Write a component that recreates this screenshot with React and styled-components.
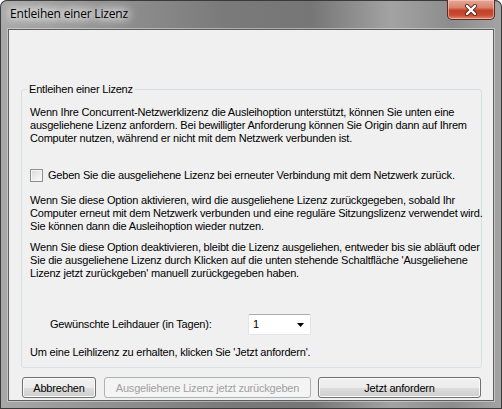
import React from 'react'
import styled, { createGlobalStyle } from 'styled-components'

const GlobalStyle = createGlobalStyle`
    html, body {
        margin: 0;
        padding: 0;
        background: #ffffff;
    }
    body {
        font-family: "Liberation Sans", Arial, sans-serif;
    }
`

const intro = [
    'Wenn Ihre Concurrent-Netzwerklizenz die Ausleihoption unterstützt, können Sie unten eine',
    'ausgeliehene Lizenz anfordern. Bei bewilligter Anforderung können Sie Origin dann auf Ihrem',
    'Computer nutzen, während er nicht mit dem Netzwerk verbunden ist.',
]

const whenOn = [
    'Wenn Sie diese Option aktivieren, wird die ausgeliehene Lizenz zurückgegeben, sobald Ihr',
    'Computer erneut mit dem Netzwerk verbunden und eine reguläre Sitzungslizenz verwendet wird.',
    'Sie können dann die Ausleihoption wieder nutzen.',
]

const whenOff = [
    'Wenn Sie diese Option deaktivieren, bleibt die Lizenz ausgeliehen, entweder bis sie abläuft oder',
    "Sie die ausgeliehene Lizenz durch Klicken auf die unten stehende Schaltfläche 'Ausgeliehene",
    "Lizenz jetzt zurückgeben' manuell zurückgegeben haben.",
]

const CloseIcon = () => (
    <svg width="14" height="12" viewBox="0 0 14 12">
        <path d="M3 2 L11 10 M11 2 L3 10" stroke="#4a1a10" strokeWidth="4.2" strokeLinecap="round" opacity="0.8" />
        <path d="M3 2 L11 10 M11 2 L3 10" stroke="#ffffff" strokeWidth="2.4" strokeLinecap="round" />
    </svg>
)

const ArrowIcon = () => (
    <svg width="7" height="4" viewBox="0 0 7 4">
        <polygon points="0,0 7,0 3.5,4" fill="#000" />
    </svg>
)

const BorrowLicenseDialog = () => {
    return (
        <S.Window>
            <GlobalStyle />
            <S.TitleBar>
                <S.Title>Entleihen einer Lizenz</S.Title>
                <S.CloseButton>
                    <CloseIcon />
                </S.CloseButton>
            </S.TitleBar>
            <S.Client>
                <S.Group>
                    <S.Legend>Entleihen einer Lizenz</S.Legend>
                    <S.Text>{intro.join('\n')}</S.Text>
                    <S.CheckRow>
                        <S.CheckBox />
                        <S.CheckLabel>
                            Geben Sie die ausgeliehene Lizenz bei erneuter Verbindung mit dem Netzwerk zurück.
                        </S.CheckLabel>
                    </S.CheckRow>
                    <S.Text $top={12}>{whenOn.join('\n')}</S.Text>
                    <S.Text $top={8}>{whenOff.join('\n')}</S.Text>
                    <S.DurationRow>
                        <S.DurationLabel>Gewünschte Leihdauer (in Tagen):</S.DurationLabel>
                        <S.Select>
                            <span>1</span>
                            <ArrowIcon />
                        </S.Select>
                    </S.DurationRow>
                    <S.Text $top={11}>Um eine Leihlizenz zu erhalten, klicken Sie 'Jetzt anfordern'.</S.Text>
                </S.Group>
                <S.ButtonRow>
                    <S.Button $width={74}>Abbrechen</S.Button>
                    <S.Button $width={207} disabled>
                        Ausgeliehene Lizenz jetzt zurückgeben
                    </S.Button>
                    <S.Button $width={163}>Jetzt anfordern</S.Button>
                </S.ButtonRow>
            </S.Client>
        </S.Window>
    )
}

const S = {
    Window: styled.div`
        display: flex;
        flex-direction: column;
        width: 502px;
        height: 409px;
        box-sizing: border-box;
        border-radius: 7px 7px 0 0;
        background: linear-gradient(
            90deg,
            #a8a8a8 0%,
            #939393 20%,
            #7a7a7a 45%,
            #767676 62%,
            #a3a3a3 78%,
            #8c8c8c 90%,
            #a4a4a4 100%
        );
        box-shadow: inset 0 0 0 1px #3a3a3a;
        overflow: hidden;
    `,
    TitleBar: styled.div`
        display: flex;
        justify-content: space-between;
        align-items: flex-start;
        height: 29px;
        flex-shrink: 0;
        padding: 0 7px 0 10px;
        box-sizing: border-box;
    `,
    Title: styled.div`
        margin-top: 6px;
        font-family: "Open Sans", "Noto Sans", sans-serif;
        font-size: 12px;
        line-height: 16px;
        color: #000;
        letter-spacing: -0.2px;
        text-shadow: 0 0 8px #fff, 0 0 8px #fff, 0 0 14px #fff, 0 0 18px rgba(255, 255, 255, 0.9);
    `,
    CloseButton: styled.div`
        display: flex;
        align-items: center;
        justify-content: center;
        width: 48px;
        height: 20px;
        box-sizing: border-box;
        border: 1px solid #5b2a20;
        border-top: none;
        border-radius: 0 0 5px 5px;
        background: linear-gradient(180deg, #e6a998 0%, #d9826b 40%, #c2412a 55%, #c94c33 80%, #e08a6e 100%);
        box-shadow: inset 0 0 0 1px rgba(255, 220, 210, 0.5);
    `,
    Client: styled.div`
        display: flex;
        flex-direction: column;
        flex: 1;
        margin: 0 8px 8px 8px;
        background: #f0f0f0;
        border: 1px solid #5e5e5e;
        box-shadow: 0 0 0 1px rgba(230, 230, 230, 0.5);
        min-height: 0;
    `,
    Group: styled.fieldset`
        margin: 53px 11px 0 12px;
        padding: 10px 8px 8px 8px;
        min-width: 0;
        border: 1px solid #d5dfe5;
        border-radius: 3px;
        display: flex;
        flex-direction: column;
        font-size: 11px;
        line-height: 13px;
        letter-spacing: -0.2px;
        color: #000;
    `,
    Legend: styled.legend`
        padding: 0 2px;
        margin-left: -3px;
        font-size: 11px;
        line-height: 13px;
        color: #000;
    `,
    Text: styled.div`
        margin-top: ${({ $top }) => $top || 0}px;
        white-space: pre;
        font-size: 11px;
        line-height: 13px;
    `,
    CheckRow: styled.div`
        display: flex;
        align-items: center;
        gap: 5px;
        margin-top: 24px;
        height: 13px;
    `,
    CheckBox: styled.div`
        width: 13px;
        height: 13px;
        box-sizing: border-box;
        border: 1px solid #8e8f8f;
        background: linear-gradient(135deg, #d6d8db 0%, #eeeeee 60%, #fbfbfb 100%);
        box-shadow: inset 0 0 0 1px #f4f4f4;
    `,
    CheckLabel: styled.span`
        white-space: nowrap;
    `,
    DurationRow: styled.div`
        display: flex;
        align-items: center;
        margin-top: 34px;
        padding-left: 20px;
        height: 21px;
    `,
    DurationLabel: styled.span`
        width: 198px;
        white-space: nowrap;
    `,
    Select: styled.div`
        display: flex;
        align-items: center;
        justify-content: space-between;
        width: 63px;
        height: 21px;
        box-sizing: border-box;
        padding: 0 6px 0 4px;
        background: #fff;
        border: 1px solid #e2e3ea;
        border-top-color: #abadb3;
        border-radius: 2px;
    `,
    ButtonRow: styled.div`
        display: flex;
        margin-top: 9px;
        padding-left: 13px;
        gap: 8px;
    `,
    Button: styled.button`
        width: ${({ $width }) => $width}px;
        height: 21px;
        box-sizing: border-box;
        margin: 0;
        padding: 0;
        font-family: "Liberation Sans", Arial, sans-serif;
        font-size: 11px;
        letter-spacing: -0.2px;
        color: #000;
        border: 1px solid #707070;
        border-radius: 3px;
        background: linear-gradient(180deg, #f2f2f2 0%, #ebebeb 50%, #dddddd 51%, #cfcfcf 100%);
        box-shadow: inset 0 0 0 1px #fbfbfb;
        &:last-child {
            margin-left: -1px;
        }
        &:disabled {
            color: #a0a0a0;
            border-color: #adb2b5;
            background: #f4f4f4;
            box-shadow: none;
        }
    `,
}

export default BorrowLicenseDialog
